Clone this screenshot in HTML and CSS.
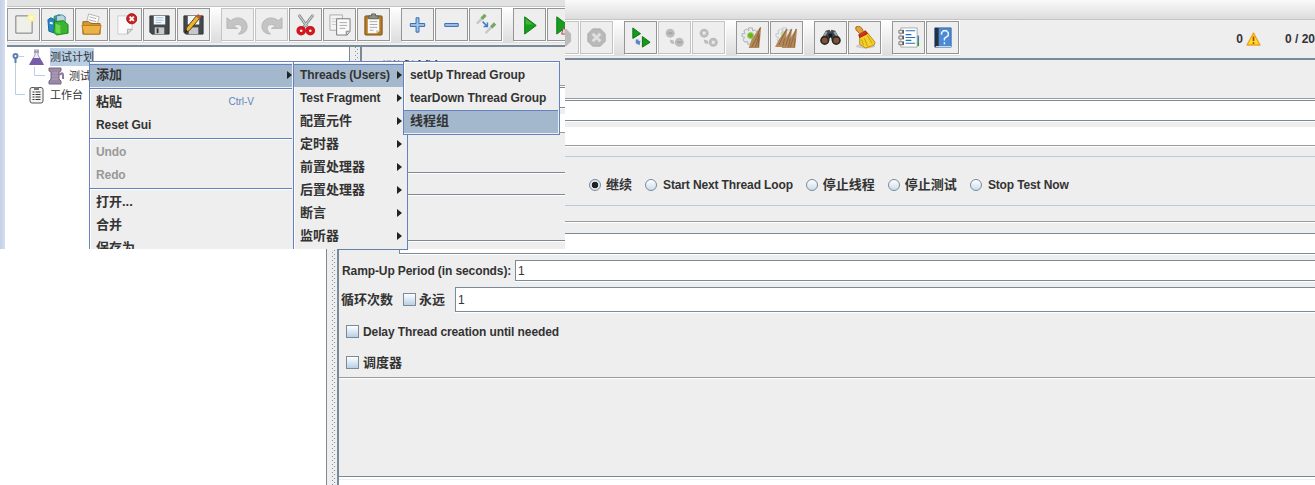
FILE: index.html
```html
<!DOCTYPE html>
<html lang="zh">
<head>
<meta charset="utf-8">
<title>JMeter</title>
<link rel="stylesheet" href="styles.css">
</head>
<body>
<div class="screen">
  <section class="back">
    <div class="menubar"></div>
    <div class="toolbar-row">
      <div class="toolbar">
        <div class="group">
          <span class="btn off"><svg viewBox="0 0 24 24"><path d="M8 3h8l5 5v8l-5 5H8l-5-5V8z" fill="#bbb"/></svg></span>
          <span class="btn off"><svg viewBox="0 0 24 24"><path d="M8 3h8l5 5v8l-5 5H8l-5-5V8z" fill="#b9b9b9" stroke="#aaa"/><path d="M8 8l8 8M16 8l-8 8" stroke="#e0e0e0" stroke-width="3"/></svg></span>
        </div>
        <div class="group">
          <span class="btn"><svg viewBox="0 0 24 24"><path d="M4 2l8 6-8 5zM14 11l8 6-8 5z" fill="#139b19" stroke="#087010"/><path d="M7 14h3v2l2-1-1 5-4-2z" fill="#5c86c5"/></svg></span>
          <span class="btn off"><svg viewBox="0 0 24 24" fill="#bcbcbc"><circle cx="7.500" cy="7.500" r="4.700"/><circle cx="17" cy="17" r="4.700"/><path d="M7 14l4 1 1 4-4-1z"/><path d="M5 7.500h5M14.500 17h5" stroke="#a5a5a5" stroke-width="2"/></svg></span>
          <span class="btn off"><svg viewBox="0 0 24 24" fill="#bcbcbc"><circle cx="7.500" cy="7.500" r="4.700"/><circle cx="17" cy="17" r="4.700"/><path d="M7 14l4 1 1 4-4-1z"/><path d="M6 6l3 3m0-3l-3 3M15.500 15.500l3 3m0-3l-3 3" stroke="#eee" stroke-width="1.300"/></svg></span>
        </div>
        <div class="group">
          <span class="btn"><svg viewBox="0 0 24 24"><path d="M8 2h4v3l3-1 2 3-2 2 3 1v3h-3l1 3-3 2-2-2-1 3H7v-3l-3 1-2-3 2-2-3-1V8h3L3 5l3-2 2 2z" fill="#e6eaec" stroke="#a9b1b5"/><circle cx="10" cy="10" r="3.200" fill="#69b51b" stroke="#a4d26b"/><path d="M20 1h1l-1 12-1 10H8l3-9z" fill="#b58a5a"/><path d="M20 2l-4 11-5 9m8-12l-4 12m4-14l-1 14" stroke="#74502f" stroke-width=".7" fill="none"/></svg></span>
          <span class="btn"><svg viewBox="0 0 24 24"><path d="M8 2h4v3l3-1 2 3-2 2 3 1v3h-3l1 3-3 2-2-2-1 3H7v-3l-3 1-2-3 2-2-3-1V8h3L3 5l3-2 2 2z" fill="#e9edef" stroke="#c0c6c9"/><circle cx="9" cy="8" r="3" fill="#bddb9a"/><path d="M12 3h1l-2 11-2 8H0l4-8zM17 3h1l-2 11-1 9H7l3-9zM22 3h1l-1 11-1 9h-9l3-9z" fill="#b58a5a"/><path d="M12 3L4 20m6-7l-2 8m9-18l-6 18m5-8l-2 9m8-19l-6 19m5-9l-1 9" stroke="#795638" stroke-width=".7" fill="none"/></svg></span>
        </div>
        <div class="group">
          <span class="btn"><svg viewBox="0 0 24 24"><path d="M7 5l4-1 1 2 1-2 4 1 5 9-8 3-2-6-2 6-8-3z" fill="#42484b"/><path d="M8 6l-4 7M16 6l4 7" stroke="#9da4a8" stroke-width="2"/><circle cx="6" cy="15" r="4.700" fill="#22282a"/><circle cx="18" cy="15" r="4.700" fill="#22282a"/><circle cx="6" cy="15" r="3" fill="#86502e"/><circle cx="18" cy="15" r="3" fill="#86502e"/><path d="M10 8h4v4h-4z" fill="#171b1d"/></svg></span>
          <span class="btn"><svg viewBox="0 0 24 24"><ellipse cx="13" cy="21" rx="10" ry="2.500" fill="#ccc"/><path d="M7 11l8-4 8 10-1 3-9 3-6-4z" fill="#f3d128" stroke="#bb8b08"/><path d="M6 9l7-4 2 3-8 4z" fill="#d9301c" stroke="#a71910"/><path d="M3 1l3-1 3 2 2 4-4 2-4-4z" fill="#e5a33b" stroke="#a76a19"/><path d="M12 13l3 8m0-11l5 8m-11-4l2 6" stroke="#c49a14"/></svg></span>
        </div>
        <div class="group">
          <span class="btn"><svg viewBox="0 0 24 24"><path d="M20 10h3v6h-3z" fill="#3a79ce"/><path d="M20 16h3v5h-3z" fill="#259a27"/><path d="M4 2h17v20H4z" fill="#fff" stroke="#aaa"/><path d="M9 5h10M9 9h6M9 12h10M9 15h6M9 18h10" stroke="#246fba" stroke-width="1.200"/><path d="M2 4.500h4v3H2zM2 10.500h4v3H2zM2 16.500h4v3H2z" fill="#eee" stroke="#777"/><path d="M6.500 4v4m0 2v4m0 2v4" stroke="#222"/></svg></span>
          <span class="btn"><svg viewBox="0 0 24 24"><path d="M4 2h17v20H4z" fill="#4c8bd4" stroke="#376ca8"/><path d="M4 2h4v20H4z" fill="#27313c"/><path d="M5 21h16v1H5z" fill="#dfe9f5"/><path d="M11 9V7l2-2h3l2 2v3l-4 3v2m0 2v2" fill="none" stroke="#eff6ff" stroke-width="1.500"/></svg></span>
        </div>
      </div>
      <div class="status">
        <b>0</b>
        <svg class="warn" viewBox="0 0 15 14"><path d="M7.500 1L14 13H1z" fill="#ffe01d" stroke="#e9a02c" stroke-width="1.300" stroke-linejoin="round"/><path d="M7.500 4.500V9M7.500 10.300V12" stroke="#a34310" stroke-width="1.700"/></svg>
        <b class="total">0 / 20</b>
      </div>
    </div>
    <div class="body">
      <div class="tree-pane"></div>
      <div class="divider"></div>
      <div class="panel">
        <div class="heading"></div>
        <div class="field name"></div>
        <div class="comment"></div>
        <div class="radios">
          <label><i class="radio on"></i>继续</label>
          <label class="en"><i class="radio"></i>Start Next Thread Loop</label>
          <label><i class="radio"></i>停止线程</label>
          <label><i class="radio"></i>停止测试</label>
          <label class="en"><i class="radio"></i>Stop Test Now</label>
        </div>
        <div class="rule"></div>
        <div class="props">
          <div class="row threads"><div class="field"></div></div>
          <div class="row ramp"><span class="en">Ramp-Up Period (in seconds):</span><div class="field">1</div></div>
          <div class="row loops"><span>循环次数</span><i class="check"></i><span class="forever">永远</span><div class="field">1</div></div>
          <div class="option en"><i class="check"></i>Delay Thread creation until needed</div>
          <div class="option"><i class="check"></i>调度器</div>
        </div>
        <div class="empty"></div>
        <div class="footer"></div>
      </div>
    </div>
  </section>

  <section class="front">
    <div class="edge"></div>
    <div class="window">
      <div class="menubar"></div>
      <div class="toolbar">
        <div class="group">
          <span class="btn"><svg viewBox="0 0 24 24"><path d="M4 3h17v18H4z" fill="#f0f0ea" stroke="#777"/><circle cx="20" cy="5" r="4" fill="#fff29a"/><circle cx="20" cy="5" r="2" fill="#fffbe0"/></svg></span>
          <span class="btn"><svg viewBox="0 0 24 24"><path d="M8 3l6-2 3 3v14H8z" fill="#3d9c77"/><path d="M11 3l6-1 3 2v5h-9z" fill="#b8d8dd" stroke="#47889b"/><path d="M2 7l3-2 4 2v14l-6-2z" fill="#2587c4" stroke="#176498"/><path d="M9 9l9-1 5 4v9l-12 2-3-3z" fill="#3ab431" stroke="#188619"/><path d="M10 11l5 2v9l-5-2z" fill="#6bd950"/><path d="M4 10l3 1" stroke="#fff" stroke-width="2"/></svg></span>
          <span class="btn"><svg viewBox="0 0 24 24"><path d="M7 9L9 1l11 3-2 8z" fill="#fff" stroke="#b5b5b5"/><path d="M10 4l7 2m-8 1l8 2" stroke="#aaa"/><path d="M3 9h6l2 2h10v11H3z" fill="#d6982f" stroke="#a26719"/><path d="M2 13h20l-2 9H4z" fill="#ecb247" stroke="#b77a20"/></svg></span>
          <span class="btn"><svg viewBox="0 0 24 24"><path d="M4 3h15v14l-5 5H4z" fill="#fafafa" stroke="#ccc"/><path d="M14 22v-5h5z" fill="#ddd" stroke="#aaa"/><circle cx="18.500" cy="6" r="5.300" fill="#ce2222" stroke="#a31111"/><path d="M16.300 3.800l4.400 4.400m0-4.400l-4.400 4.400" stroke="#fff" stroke-width="2"/></svg></span>
          <span class="btn"><svg viewBox="0 0 24 24"><path d="M2 3h20v19H4l-2-2z" fill="#42484b" stroke="#2e3335"/><path d="M6 3h12v9H6z" fill="#f4f7f9"/><path d="M8 5h8M8 7.500h8M8 10h6" stroke="#9bc1da"/><path d="M7 15h10v7H7z" fill="#c6c9ca"/><path d="M9 16h2v5H9z" fill="#333"/></svg></span>
          <span class="btn"><svg viewBox="0 0 24 24"><path d="M2 3h20v19H4l-2-2z" fill="#42484b" stroke="#2e3335"/><path d="M6 3h12v9H6z" fill="#f4f7f9"/><path d="M7 15h10v7H7z" fill="#c6c9ca"/><path d="M3 21l2-6L15 3l3 3L8 18z" fill="#eab62f" stroke="#5a3a15"/><path d="M15 3l2-2 3 3-2 2z" fill="#d1512b"/><path d="M3 21l1-4 2 2z" fill="#222"/></svg></span>
        </div>
        <div class="group">
          <span class="btn off"><svg viewBox="0 0 24 24"><path d="M1 5l4 3c7-6 17-2 17 6 0 5-4 8-9 8 5-4 5-10-1-10-2 0-3 1-4 2l4 2H1z" fill="#c4c4c4" stroke="#b5b5b5"/></svg></span>
          <span class="btn off"><svg viewBox="0 0 24 24"><path d="M23 5l-4 3C12 2 2 6 2 14c0 5 4 8 9 8-5-4-5-10 1-10 2 0 3 1 4 2l-4 2h11z" fill="#c4c4c4" stroke="#b5b5b5"/></svg></span>
          <span class="btn"><svg viewBox="0 0 24 24"><path d="M5 2l10 14M20 2L9 16" stroke="#8b9092" stroke-width="3"/><path d="M5 2l10 14M20 2L9 16" stroke="#dce0e1"/><ellipse cx="7.500" cy="18.500" rx="3.200" ry="3.200" fill="none" stroke="#d0171d" stroke-width="3.600"/><ellipse cx="17" cy="18.500" rx="3.200" ry="3.200" fill="none" stroke="#d0171d" stroke-width="3.600"/></svg></span>
          <span class="btn"><svg viewBox="0 0 24 24"><path d="M2 2h13v16H2z" fill="#f4f4f4" stroke="#aaa"/><path d="M4 6h8M4 9h8M4 12h5" stroke="#ccc"/><path d="M9 6h14v13l-3 4H9z" fill="#fafafa" stroke="#777"/><path d="M12 10h8M12 13h8M12 16h6" stroke="#aaa"/><path d="M19 23v-4h4" fill="#ccc" stroke="#888"/></svg></span>
          <span class="btn"><svg viewBox="0 0 24 24"><rect x="3" y="3" width="18" height="20" rx="1" fill="#b67a24" stroke="#795017"/><path d="M6 6h12v13l-3 2H6z" fill="#fafafa"/><path d="M8 9h8M8 12h8M8 15h8M8 18h4" stroke="#aaa"/><path d="M7 6V3h3V1h4v2h3v3z" fill="#8d9284" stroke="#5e6358"/><path d="M14 22l1-4h4z" fill="#ccc"/></svg></span>
        </div>
        <div class="group">
          <span class="btn"><svg viewBox="0 0 24 24"><path d="M10.500 5h3v6h6v3h-6v6h-3v-6h-6v-3h6z" fill="#9cc4ed" stroke="#336aab"/></svg></span>
          <span class="btn"><svg viewBox="0 0 24 24"><path d="M5 11h14v3H5z" fill="#9cc4ed" stroke="#336aab"/></svg></span>
          <span class="btn"><svg viewBox="0 0 24 24"><path d="M3 11l6-6M12 21l7-7" stroke="#c6c9c6" stroke-width="2.500"/><path d="M8 6l4-4M18 15l4-4" stroke="#75a863" stroke-width="3.500"/><path d="M9 9l5 5m0-4v4h-4" fill="none" stroke="#3b7fc8" stroke-width="1.500"/></svg></span>
        </div>
        <div class="group">
          <span class="btn"><svg viewBox="0 0 24 24"><path d="M7 4l12 9-12 9z" fill="#159f1d" stroke="#08770d"/><path d="M8 6l8 6H8z" fill="#42b53c"/></svg></span>
          <span class="btn"><svg viewBox="0 0 24 24"><path d="M5 4l12 9-12 9z" fill="#159f1d" stroke="#08770d"/><path d="M12 15l5 7h-7z" fill="#d3ddeb" stroke="#b34444"/></svg></span>
        </div>
      </div>
      <div class="workspace">
        <div class="tree">
          <svg class="links" viewBox="0 0 80 70"><path d="M8.500 12v35.500H18M12 9.500h5M27.500 20v8.500H38" fill="none" stroke="#b8cfe5"/><circle cx="8.500" cy="9" r="2" fill="#fff" stroke="#5b80b0" stroke-width="2"/><path d="M8.500 11v5" stroke="#5b80b0" stroke-width="2"/></svg>
          <div class="node plan"><svg viewBox="0 0 18 18"><path d="M6 2h5M7 2v5l-5 9h13l-5-9V2" fill="#eeeafa" stroke="#a199b5"/><path d="M5 10h7l4 7H1z" fill="#765da9"/><path d="M6 4h5" stroke="#777"/></svg><span class="picked">测试计划</span></div>
          <div class="node child"><svg viewBox="0 0 18 18"><path d="M2 1h12v3l-2 1v7l2 2v3H2v-3l2-2V5L2 4z" fill="#9a8aa8" stroke="#77687f"/><path d="M12 8c5-4 4 0 4 4" fill="none" stroke="#8b789b" stroke-width="2"/><path d="M5 6h6M5 9h6M5 12h6" stroke="#b3a4bb"/></svg><span>测试</span></div>
          <div class="node bench"><svg viewBox="0 0 18 18"><rect x="2" y="1.500" width="13" height="15.500" rx="2" fill="#f5f5f5" stroke="#555"/><path d="M6 1h5v3H6z" fill="#777"/><path d="M4.500 6h2m1 0h5M4.500 8.500h2m1 0h5M4.500 11h2m1 0h5M4.500 13.500h2m1 0h5" stroke="#333"/></svg><span>工作台</span></div>
        </div>
        <div class="divider"></div>
        <div class="content">
          <div class="title">测试计划</div>
          <div class="field"></div>
          <div class="comment"></div>
          <div class="block one"></div>
          <div class="block two"></div>
          <div class="block three"></div>
        </div>
      </div>
    </div>

    <div class="menu main">
      <div class="item active">添加<i class="arrow"></i></div>
      <div class="sep"></div>
      <div class="item">粘贴<span class="key">Ctrl-V</span></div>
      <div class="item en">Reset Gui</div>
      <div class="sep"></div>
      <div class="item en disabled">Undo</div>
      <div class="item en disabled">Redo</div>
      <div class="sep"></div>
      <div class="item">打开...</div>
      <div class="item">合并</div>
      <div class="item">保存为</div>
    </div>
    <div class="menu add">
      <div class="item en active">Threads (Users)<i class="arrow"></i></div>
      <div class="item en">Test Fragment<i class="arrow"></i></div>
      <div class="item">配置元件<i class="arrow"></i></div>
      <div class="item">定时器<i class="arrow"></i></div>
      <div class="item">前置处理器<i class="arrow"></i></div>
      <div class="item">后置处理器<i class="arrow"></i></div>
      <div class="item">断言<i class="arrow"></i></div>
      <div class="item">监听器<i class="arrow"></i></div>
    </div>
    <div class="menu users">
      <div class="item en">setUp Thread Group</div>
      <div class="item en">tearDown Thread Group</div>
      <div class="item active">线程组</div>
    </div>
  </section>
  <div class="seam"></div>
</div>
</body>
</html>
```
FILE: styles.css
```css
* { box-sizing: border-box; }
body {
  margin: 0;
  overflow: hidden;
  background: #fff;
  color: #333;
  font: bold 13px/16px "Liberation Sans", "Noto Sans CJK SC", sans-serif;
}
svg { display: block; }
.en, .row .en { font-size: 12px; letter-spacing: -0.1px; }
.screen { position: relative; width: 1315px; height: 485px; overflow: hidden; }
.back { display: flex; flex-direction: column; height: 485px; }
.menubar { flex: none; background: linear-gradient(#fafafa, #dcdcdc); border-bottom: 1px solid #c4c4c4; }
.back > .menubar { height: 20px; }
.toolbar-row { display: flex; flex: none; height: 40px; background: #eee; border-bottom: 2px solid #7a8a99; }
.toolbar { display: flex; gap: 11px; background: linear-gradient(#fff, #dcdcdc); border-bottom: 2px solid #eee; overflow: hidden; }
.back .toolbar { width: 961px; padding: 1px 0 0 546px; }
.group { display: flex; flex: none; gap: 1px; }
.btn {
  display: flex; align-items: center; justify-content: center;
  width: 33px; height: 33px; background: #eee;
  border: 1px solid #959595; box-shadow: 1px 1px #fff;
}
.btn.off { border-color: #c4c4c4; }
.btn svg { width: 23px; height: 23px; }
.status { display: flex; align-items: center; padding-left: 276px; font-size: 12px; white-space: nowrap; }
.warn { width: 15px; height: 14px; margin: 0 24px 0 3px; }

.body { display: flex; flex: 1; min-height: 0; }
.tree-pane { width: 327px; flex: none; background: #fff; border-right: 1px solid #7a8a99; }
.divider { flex: none; width: 10px; background: #eee; padding-left: 5px; }
.divider::before {
  content: ""; display: block; width: 3px; height: 100%;
  background: linear-gradient(#8393a3, #8393a3) 0 0 / 1px 1px, transparent;
  background: conic-gradient(#8393a3 0 0) 0 0 / 0 0,
    repeating-linear-gradient(#8393a3 0 1px, transparent 1px 4px) 0 0 / 1px 100% no-repeat,
    repeating-linear-gradient(transparent 0 2px, #8393a3 2px 3px, transparent 3px 4px) 2px 0 / 1px 100% no-repeat;
}
.panel { display: flex; flex-direction: column; flex: 1; min-width: 0; background: #eee; border-left: 2px solid #7a8a99; }
.heading { height: 40px; flex: none; border-bottom: 1px solid #fff; box-shadow: inset 0 -1px #9a9a9a; }
.field { background: #fff; border: 1px solid #7a8a99; border-right: 0; box-shadow: 0 1px #fff; font-size: 12px; font-weight: normal; padding-left: 2px; }
.field.name { height: 21px; flex: none; }
.comment { background: #fff; }
.panel .comment { flex: none; height: 19px; margin-top: 6px; border-bottom: 1px solid #9a9a9a; box-shadow: 0 1px #fff; }
.radios {
  display: flex; align-items: center; gap: 13px; flex: none;
  height: 50px; margin-top: 10px; padding: 8px 0 0 250px;
  border-top: 1px solid #bccbdc; border-bottom: 1px solid #bccbdc;
}
.radios label { display: flex; align-items: center; gap: 5px; white-space: nowrap; }
.radios .en { gap: 6px; letter-spacing: -0.13px; }
.radio { width: 12px; height: 12px; border: 1px solid #7a8a99; border-radius: 50%; background: linear-gradient(#fff, #cbdcec); }
.radio.on { background: radial-gradient(circle, #222 0 3px, #dfe8f0 3.6px); }
.rule { flex: none; height: 16px; border-bottom: 1px solid #9a9a9a; box-shadow: 0 1px #fff; }
.props { flex: none; height: 156px; padding-top: 11px; border-bottom: 1px solid #9a9a9a; box-shadow: 0 1px #fff; }
.row { display: flex; align-items: center; height: 21px; margin-bottom: 6px; }
.row .field { flex: 1; height: 100%; line-height: 20px; }
.threads { padding-left: 60px; }
.ramp { padding-left: 3px; }
.ramp span { width: 173px; white-space: nowrap; }
.loops { height: 25px; padding-left: 2px; margin-bottom: 4px; }
.loops span { width: 62px; }
.loops .forever { width: 36px; margin-left: 3px; }
.loops .field { line-height: 24px; }
.check { flex: none; width: 13px; height: 13px; border: 1px solid #7a8a99; background: linear-gradient(#fff, #b8cfe5); }
.option { display: flex; align-items: center; gap: 4px; height: 31px; padding-left: 7px; }
.empty { flex: 1; }
.footer { flex: none; height: 9px; background: #fff; border-top: 1px solid #7a8a99; }
.footer::before { content: ""; display: block; height: 1px; margin-top: 2px; background: #eee; }

.front { position: absolute; left: 0; top: 0; display: flex; width: 565px; height: 249px; overflow: hidden; background: #fff; }
.seam { position: absolute; left: 337px; top: 249px; width: 71px; height: 1px; background: #6382a8; }
.edge { flex: none; width: 5px; background: linear-gradient(90deg, #c4d0e6, #d5def0); }
.window { display: flex; flex-direction: column; width: 560px; padding-left: 2px; }
.window > .menubar { height: 7px; background: #e2e2e2; }
.front .toolbar { flex: none; height: 38px; padding-top: 1px; }
.workspace { display: flex; flex: 1; min-height: 0; border-top: 2px solid #7a8a99; }
.tree { position: relative; flex: none; width: 343px; background: #fff; border-right: 1px solid #7a8a99; }
.links { position: absolute; left: 0; top: 0; width: 80px; height: 70px; }
.node { position: relative; display: flex; align-items: center; gap: 4px; height: 19px; padding-left: 21px; font-size: 11px; font-weight: normal; line-height: 18px; }
.node svg { width: 18px; height: 18px; }
.node.child { padding-left: 40px; }
.node span { white-space: nowrap; }
.picked { background: #b8cfe5; }
.content { flex: 1; background: #eee; border-left: 2px solid #7a8a99; }
.title { height: 40px; padding: 11px 0 0 20px; font-size: 14px; line-height: 18px; border-bottom: 1px solid #fff; box-shadow: inset 0 -1px #9a9a9a; }
.content .field { height: 21px; }
.content .comment { height: 19px; margin-top: 6px; border-bottom: 1px solid #9a9a9a; }
.block { border-bottom: 1px solid #7f8890; box-shadow: 0 1px #fff; }
.one { height: 40px; }
.two { height: 22px; }
.three { height: 46px; }

.menu { position: absolute; top: 61px; padding: 2px 1px 1px 0; background: #eee; border: 1px solid #6382bf; box-shadow: inset 1px 1px #fff; }
.main { left: 89px; width: 205px; }
.add { left: 293px; width: 115px; }
.users { left: 403px; width: 157px; height: 74px; }
.item { display: flex; align-items: center; height: 23px; padding: 0 4px 1px 6px; white-space: nowrap; }
.item.en { padding-bottom: 2px; }
.main .item { padding-right: 0; }
.users .en { letter-spacing: -0.05px; }
.item.active { background: #a3b8cc; box-shadow: inset 0 1px #6382bf; }
.item.disabled { color: #999; }
.key { margin-left: auto; margin-right: 38px; font-size: 10px; font-weight: normal; color: #6382bf; }
.arrow { margin-left: auto; border: 4.5px solid transparent; border-left: 5px solid #222; border-right: 0; }
.sep { height: 4px; padding-top: 1px; }
.sep::before { content: ""; display: block; height: 1px; background: #6382bf; box-shadow: 0 1px #fff; }
```
